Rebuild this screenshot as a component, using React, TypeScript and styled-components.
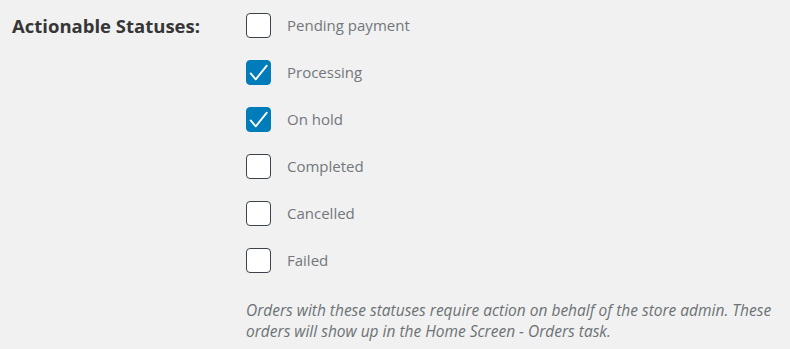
import React, { useState } from 'react';
import styled, { createGlobalStyle } from 'styled-components';

const GlobalStyle = createGlobalStyle`
  html, body {
    margin: 0;
    padding: 0;
    background: #f1f1f1;
  }
  body {
    font-family: "Open Sans", "Noto Sans", "Liberation Sans", sans-serif;
  }
`;

const Row = styled.div`
  display: flex;
  flex-direction: row;
  align-items: flex-start;
  padding: 13px 0 0 12px;
`;

const Heading = styled.div`
  width: 234px;
  flex-shrink: 0;
  font-size: 18.5px;
  font-weight: 700;
  color: #363636;
  line-height: 25px;
`;

const Field = styled.div`
  display: flex;
  flex-direction: column;
`;

const OptionList = styled.div`
  display: flex;
  flex-direction: column;
  gap: 22px;
`;

const Option = styled.label`
  display: flex;
  align-items: center;
  gap: 16px;
  height: 25px;
  cursor: pointer;
`;

const Box = styled.span<{ $checked: boolean }>`
  width: 25px;
  height: 25px;
  box-sizing: border-box;
  border-radius: 4px;
  border: 1px solid ${p => (p.$checked ? '#007cba' : '#3c434a')};
  background: ${p => (p.$checked ? '#007cba' : '#fff')};
  display: flex;
  align-items: center;
  justify-content: center;
  flex-shrink: 0;
  overflow: hidden;
`;

const OptionText = styled.span`
  font-size: 15px;
  color: #72777c;
  line-height: 25px;
`;

const Hint = styled.p`
  margin: 27px 0 0 0;
  font-size: 15.5px;
  font-style: italic;
  color: #6c7175;
  line-height: 21px;
  width: 544px;
`;

const statuses = [
  { label: 'Pending payment', checked: false },
  { label: 'Processing', checked: true },
  { label: 'On hold', checked: true },
  { label: 'Completed', checked: false },
  { label: 'Cancelled', checked: false },
  { label: 'Failed', checked: false },
];

function Check() {
  return (
    <svg width="25" height="25" viewBox="0 0 25 25">
      <path d="M4 13.5 L9.5 20 L21.5 5" fill="none" stroke="#fff" strokeWidth="2" strokeLinecap="round" strokeLinejoin="round" />
    </svg>
  );
}

function App() {
  const [items, setItems] = useState(statuses);

  const toggle = (i: number) => {
    setItems(items.map((s, j) => (j === i ? { ...s, checked: !s.checked } : s)));
  };

  return (
    <>
      <GlobalStyle />
      <Row>
        <Heading>Actionable Statuses:</Heading>
        <Field>
          <OptionList>
            {items.map((s, i) => (
              <Option key={s.label} onClick={() => toggle(i)}>
                <Box $checked={s.checked}>{s.checked && <Check />}</Box>
                <OptionText>{s.label}</OptionText>
              </Option>
            ))}
          </OptionList>
          <Hint>
            Orders with these statuses require action on behalf of the store admin. These orders will show up in the Home Screen - Orders task.
          </Hint>
        </Field>
      </Row>
    </>
  );
}

export default App;
